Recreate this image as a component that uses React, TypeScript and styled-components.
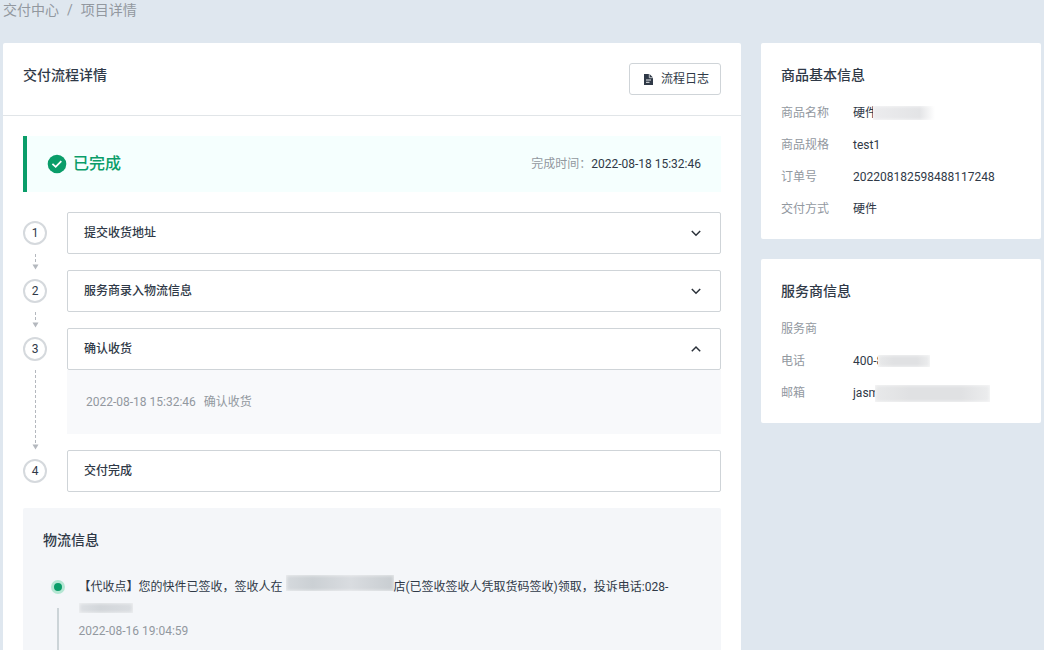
import React, { useState } from "react";
import styled, { createGlobalStyle } from "styled-components";

const color = {
  page: "#dfe7ef",
  ink: "#2f3947",
  muted: "#92989f",
  line: "#cfd4d8",
  green: "#0a9d69",
};

const GlobalStyle = createGlobalStyle`
  *, *::before, *::after { box-sizing: border-box; }
  body {
    margin: 0;
    background: ${color.page};
    color: ${color.ink};
    font-family: Roboto, "Noto Sans CJK SC", sans-serif;
    font-size: 12px;
    line-height: 20px;
  }
  h1, h2, p, dl, dd, ol, ul { margin: 0; padding: 0; }
  ol, ul { list-style: none; }
  button { font: inherit; color: inherit; cursor: pointer; }
`;

const Page = styled.div`
  display: flex;
  flex-direction: column;
  min-height: 100vh;
  padding: 0 3px;
`;

const Breadcrumb = styled.nav`
  display: flex;
  gap: 8px;
  margin-bottom: 23px;
  font-size: 14px;
  color: ${color.muted};
  a { color: inherit; text-decoration: none; }
`;

const Columns = styled.div`
  flex: 1;
  display: grid;
  grid-template-columns: minmax(0, 1fr) 280px;
  gap: 20px;
`;

const MainCard = styled.main`
  display: flex;
  flex-direction: column;
  background: #fff;
  border-radius: 2px 2px 0 0;
`;

const CardHeader = styled.header`
  display: flex;
  justify-content: space-between;
  align-items: flex-start;
  padding: 20px;
  border-bottom: 1px solid #e1e5e8;
`;

const Title = styled.h2`
  font-size: 14px;
  line-height: 24px;
  font-weight: 500;
`;

const LogButton = styled.button`
  display: flex;
  align-items: center;
  gap: 4px;
  height: 32px;
  padding: 0 11px;
  background: #fff;
  border: 1px solid ${color.line};
  border-radius: 3px;
`;

const CardBody = styled.div`
  flex: 1;
  display: flex;
  flex-direction: column;
  padding: 20px 20px 0;
`;

const Banner = styled.section`
  display: flex;
  align-items: center;
  gap: 6px;
  height: 56px;
  margin-bottom: 20px;
  padding: 0 20px;
  border-left: 4px solid ${color.green};
  background: #f5fffe;
`;

const Status = styled.strong`
  flex: 1;
  font-size: 16px;
  font-weight: 500;
  color: ${color.green};
`;

const Finished = styled.p`
  display: flex;
`;

const Muted = styled.span`
  color: ${color.muted};
`;

const StepRow = styled.li`
  display: flex;
  gap: 20px;
`;

const Marker = styled.div`
  display: flex;
  flex-direction: column;
  align-items: center;
  gap: 9px;
  width: 24px;
  padding-top: 9px;
`;

const StepNumber = styled.span`
  width: 24px;
  height: 24px;
  border: 2px solid #d5d9dd;
  border-radius: 50%;
  text-align: center;
`;

const Connector = styled.div`
  flex: 1;
  display: flex;
  flex-direction: column;
  align-items: center;
  width: 7px;
  &::before {
    content: "";
    flex: 1;
    width: 1px;
    background: repeating-linear-gradient(#b4b8be 0 3px, transparent 3px 5px);
  }
`;

const StepContent = styled.div`
  flex: 1;
  min-width: 0;
  padding-bottom: 16px;
`;

const StepHead = styled.button`
  display: flex;
  align-items: center;
  justify-content: space-between;
  width: 100%;
  height: 42px;
  padding: 0 16px;
  background: #fff;
  border: 1px solid ${color.line};
  border-radius: 2px;
  font-weight: 500;
  text-align: left;
`;

const StepPanel = styled.div`
  display: flex;
  align-items: center;
  gap: 8px;
  height: 64px;
  padding: 0 19px;
  background: #f8f9fb;
  color: ${color.muted};
`;

const Logistics = styled.section`
  flex: 1;
  display: flex;
  flex-direction: column;
  gap: 23px;
  padding: 20px 20px 0;
  background: #f4f6f9;
  border-radius: 2px 2px 0 0;
`;

const Events = styled.ul`
  flex: 1;
  display: flex;
`;

const Event = styled.li`
  display: flex;
  gap: 13px;
  padding-left: 8px;
  line-height: 22px;
`;

const Track = styled.div`
  display: flex;
  flex-direction: column;
  align-items: center;
  gap: 14px;
  width: 15px;
  padding-top: 5px;
  &::before {
    content: "";
    width: 14px;
    height: 14px;
    border: 3px solid #b5e6d3;
    border-radius: 50%;
    background: ${color.green};
  }
  &::after {
    content: "";
    flex: 1;
    width: 2px;
    background: #ccd4d8;
  }
`;

const Masked = styled.span<{ $width: number; $height: number; $tone?: string; $overlap?: number }>`
  display: inline-block;
  width: ${(p) => p.$width}px;
  height: ${(p) => p.$height}px;
  margin-left: -${(p) => p.$overlap ?? 0}px;
  border-radius: 1px;
  background: ${(p) => p.$tone ?? "linear-gradient(90deg, #e8e9ea, #e0e1e3 30%, #e0e1e3 75%, #ecedee)"};
  box-shadow: inset 0 0 3px 1px rgba(255, 255, 255, 0.5);
`;

const Aside = styled.aside`
  display: flex;
  flex-direction: column;
  gap: 20px;
`;

const InfoCard = styled.section`
  padding: 20px;
  background: #fff;
  border-radius: 2px;
`;

const InfoList = styled.dl`
  display: grid;
  grid-template-columns: 72px 1fr;
  row-gap: 12px;
  margin-top: 16px;
  dt { color: ${color.muted}; }
  dd { display: flex; align-items: center; height: 20px; }
`;

const FileIcon = () => (
  <svg width="16" height="16" viewBox="0 0 16 16" aria-hidden="true">
    <path d="M3 3h5.500L12 6.500V14H3z" fill={color.ink} />
    <path d="M8.300 3v3.700H12" fill="none" stroke="#fff" strokeWidth="0.700" />
    <path d="M5 9h5M5 11.300h3.500" stroke="#fff" strokeWidth="0.900" />
  </svg>
);

const CheckIcon = () => (
  <svg width="20" height="20" viewBox="0 0 20 20" aria-hidden="true">
    <circle cx="10" cy="10" r="9.300" fill={color.green} />
    <path d="M5.400 9.800l3.300 3 5.600-5.600" fill="none" stroke="#fff" strokeWidth="1.800" />
  </svg>
);

const Chevron = ({ up }: { up: boolean }) => (
  <svg width="16" height="16" viewBox="0 0 16 16" aria-hidden="true">
    <path
      d={up ? "M3.800 10.200L8 6l4.200 4.200" : "M3.800 6L8 10.200 12.200 6"}
      fill="none"
      stroke="#2b313a"
      strokeWidth="1.500"
    />
  </svg>
);

const ArrowTip = () => (
  <svg width="7" height="6" viewBox="0 0 7 6" aria-hidden="true">
    <path d="M0.500 0.500h6l-3 5z" fill="#b4b8be" />
  </svg>
);

const steps = [
  { title: "提交收货地址", time: "2022-08-18 15:32:46" },
  { title: "服务商录入物流信息", time: "2022-08-18 15:32:46" },
  { title: "确认收货", time: "2022-08-18 15:32:46" },
  { title: "交付完成" },
];

export default function App() {
  const [open, setOpen] = useState(2);

  return (
    <>
      <GlobalStyle />
      <Page>
        <Breadcrumb aria-label="面包屑">
          <a href="#delivery">交付中心</a>
          <span>/</span>
          <span>项目详情</span>
        </Breadcrumb>
        <Columns>
          <MainCard>
            <CardHeader>
              <Title as="h1">交付流程详情</Title>
              <LogButton type="button">
                <FileIcon />
                流程日志
              </LogButton>
            </CardHeader>
            <CardBody>
              <Banner>
                <CheckIcon />
                <Status>已完成</Status>
                <Finished>
                  <Muted>完成时间：</Muted>
                  <time>2022-08-18 15:32:46</time>
                </Finished>
              </Banner>
              <ol>
                {steps.map((step, i) => (
                  <StepRow key={step.title}>
                    <Marker>
                      <StepNumber>{i + 1}</StepNumber>
                      {i < steps.length - 1 && (
                        <Connector>
                          <ArrowTip />
                        </Connector>
                      )}
                    </Marker>
                    <StepContent>
                      {step.time ? (
                        <StepHead
                          type="button"
                          aria-expanded={open === i}
                          onClick={() => setOpen(open === i ? -1 : i)}
                        >
                          {step.title}
                          <Chevron up={open === i} />
                        </StepHead>
                      ) : (
                        <StepHead as="div">{step.title}</StepHead>
                      )}
                      {open === i && step.time && (
                        <StepPanel>
                          <time>{step.time}</time>
                          <span>{step.title}</span>
                        </StepPanel>
                      )}
                    </StepContent>
                  </StepRow>
                ))}
              </ol>
              <Logistics>
                <Title>物流信息</Title>
                <Events>
                  <Event>
                    <Track />
                    <div>
                      <p>
                        【代收点】您的快件已签收，签收人在{" "}
                        <Masked $width={108} $height={16} $tone="linear-gradient(90deg, #d5d9dd, #cbd0d4 25%, #d9dce0 60%, #c8cdd1)" />
                        店(已签收签收人凭取货码签收)领取，投诉电话:028-
                        <Masked $width={54} $height={10} $tone="linear-gradient(90deg, #dde0e4, #d2d6da 40%, #dadde1)" />
                      </p>
                      <Muted as="time">2022-08-16 19:04:59</Muted>
                    </div>
                  </Event>
                </Events>
              </Logistics>
            </CardBody>
          </MainCard>
          <Aside>
            <InfoCard>
              <Title>商品基本信息</Title>
              <InfoList>
                <dt>商品名称</dt>
                <dd>
                  硬件
                  <Masked $width={62} $height={14} $overlap={4} $tone="linear-gradient(90deg, #ececee, #e3e4e6 75%, #fff)" />
                </dd>
                <dt>商品规格</dt>
                <dd>test1</dd>
                <dt>订单号</dt>
                <dd>202208182598488117248</dd>
                <dt>交付方式</dt>
                <dd>硬件</dd>
              </InfoList>
            </InfoCard>
            <InfoCard>
              <Title>服务商信息</Title>
              <InfoList>
                <dt>服务商</dt>
                <dd />
                <dt>电话</dt>
                <dd>
                  400-8
                  <Masked $width={52} $height={12} $overlap={5} />
                </dd>
                <dt>邮箱</dt>
                <dd>
                  jasm
                  <Masked $width={115} $height={17} $overlap={4} />
                </dd>
              </InfoList>
            </InfoCard>
          </Aside>
        </Columns>
      </Page>
    </>
  );
}
